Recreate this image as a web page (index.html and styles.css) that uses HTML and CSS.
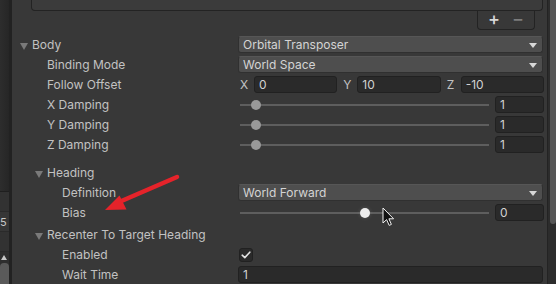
FILE: index.html
```html
<!DOCTYPE html>
<html lang="en">
<head>
    <meta charset="UTF-8">
    <meta name="viewport" content="width=device-width, initial-scale=1.0">
    <title>Cinemachine Body</title>
    <link rel="stylesheet" href="styles.css">
</head>
<body>
    <div class="window">
        <div class="side">
            <div class="side-top"></div>
            <div class="side-row"></div>
            <div class="side-row side-value">5</div>
            <div class="side-row"></div>
            <div class="side-arrow"></div>
            <div class="side-thumb"></div>
        </div>

        <div class="inspector">
            <div class="list-box"></div>
            <div class="list-footer">
                <span class="list-add">+</span>
                <span class="list-remove">−</span>
            </div>

            <div class="rows">
                <div class="row">
                    <div class="label foldout">Body</div>
                    <div class="dropdown">Orbital Transposer</div>
                </div>
                <div class="row">
                    <div class="label indent-1">Binding Mode</div>
                    <div class="dropdown">World Space</div>
                </div>
                <div class="row">
                    <div class="label indent-1">Follow Offset</div>
                    <div class="vector">
                        <div class="axis"><span>X</span><div class="field">0</div></div>
                        <div class="axis"><span>Y</span><div class="field">10</div></div>
                        <div class="axis"><span>Z</span><div class="field">-10</div></div>
                    </div>
                </div>
                <div class="row">
                    <div class="label indent-1">X Damping</div>
                    <div class="slider">
                        <div class="track"><span class="knob" style="left: 6.3%"></span></div>
                        <div class="field">1</div>
                    </div>
                </div>
                <div class="row">
                    <div class="label indent-1">Y Damping</div>
                    <div class="slider">
                        <div class="track"><span class="knob" style="left: 6.3%"></span></div>
                        <div class="field">1</div>
                    </div>
                </div>
                <div class="row">
                    <div class="label indent-1">Z Damping</div>
                    <div class="slider">
                        <div class="track"><span class="knob" style="left: 6.3%"></span></div>
                        <div class="field">1</div>
                    </div>
                </div>

                <div class="row gap-large">
                    <div class="label foldout indent-fold">Heading</div>
                </div>
                <div class="row">
                    <div class="label indent-2">Definition</div>
                    <div class="dropdown">World Forward</div>
                </div>
                <div class="row">
                    <div class="label indent-2">Bias</div>
                    <div class="slider">
                        <div class="track"><span class="knob hot" style="left: 50%"></span></div>
                        <div class="field">0</div>
                    </div>
                </div>

                <div class="row gap-small">
                    <div class="label foldout indent-fold">Recenter To Target Heading</div>
                </div>
                <div class="row">
                    <div class="label indent-2">Enabled</div>
                    <div class="checkbox">
                        <svg width="14" height="14" viewBox="0 0 14 14">
                            <path d="M3.2 7.2 L5.8 9.6 L10.8 4.2" fill="none" stroke="#e2e2e2" stroke-width="1.6" stroke-linecap="round" stroke-linejoin="round"/>
                        </svg>
                    </div>
                </div>
                <div class="row">
                    <div class="label indent-2">Wait Time</div>
                    <div class="field wide">1</div>
                </div>
            </div>
        </div>

        <div class="scrollbar"><div class="scroll-thumb"></div></div>

        <!-- red annotation arrow -->
        <svg class="annotation" width="556" height="284" viewBox="0 0 556 284">
            <line x1="177" y1="177" x2="118" y2="202.5" stroke="#e5232a" stroke-width="4.5" stroke-linecap="round"/>
            <polygon points="105,210 119.5,195.5 126.5,209.5" fill="#e5232a"/>
        </svg>

        <!-- mouse pointer -->
        <svg class="pointer" width="13" height="20" viewBox="0 0 13 20">
            <path d="M1 1 L1 16 L4.6 12.6 L7.2 18.4 L9.4 17.4 L6.9 11.8 L11.6 11.8 Z" fill="#111" stroke="#f2f2f2" stroke-width="1" stroke-linejoin="round"/>
        </svg>
    </div>
</body>
</html>
```

FILE: styles.css
```css
* {
    box-sizing: border-box;
}
body {
    margin: 0;
    background: #383838;
    color: #c2c2c2;
    font-family: 'Inter', 'Noto Sans', sans-serif;
    font-size: 12px;
    overflow: hidden;
}
.window {
    position: relative;
    display: flex;
    width: 556px;
    height: 284px;
    overflow: hidden;
}

/* left neighbour panel */
.side {
    width: 12px;
    flex-shrink: 0;
    background: #2e2e2e;
    border-right: 3px solid #222;
    display: flex;
    flex-direction: column;
}
.side-top {
    height: 192px;
    background: linear-gradient(90deg, #2d2d2d, #262626);
    border-bottom: 1px solid #1f1f1f;
}
.side-row {
    height: 20px;
    background: #323232;
    border-bottom: 1px solid #2a2a2a;
}
.side-value {
    background: #363636;
    color: #c8c8c8;
    font-size: 11px;
    line-height: 20px;
}
.side-arrow {
    margin: 3px 0 0 1px;
    width: 0;
    height: 0;
    border-left: 3.5px solid transparent;
    border-right: 3.5px solid transparent;
    border-bottom: 5px solid #c8c8c8;
}
.side-thumb {
    margin-top: 3px;
    width: 9px;
    flex: 1;
    background: #5a5a5a;
    border-radius: 4px 4px 0 0;
}

/* inspector */
.inspector {
    flex: 1;
    padding: 0 3px 0 8px;
    display: flex;
    flex-direction: column;
}
.list-box {
    height: 12px;
    margin: 0 1px 0 11px;
    background: #3b3b3b;
    border: 1px solid #232323;
    border-top: none;
    border-radius: 0 0 4px 4px;
}
.list-footer {
    align-self: flex-end;
    width: 58px;
    height: 19px;
    margin-right: 9px;
    border: 1px solid #232323;
    border-top: none;
    border-radius: 0 0 4px 4px;
    display: flex;
    justify-content: center;
    align-items: center;
    gap: 12px;
    font-size: 18px;
    font-weight: 500;
    line-height: 1;
    padding-bottom: 2px;
}
.list-add {
    color: #d8d8d8;
}
.list-remove {
    color: #7c7c7c;
}
.rows {
    margin-top: 4px;
}
.row {
    display: grid;
    grid-template-columns: 218px 1fr;
    align-items: center;
    height: 20px;
}
.row.gap-large {
    margin-top: 8px;
}
.row.gap-small {
    margin-top: 2px;
}
.label {
    white-space: nowrap;
    line-height: 21px;
}
.foldout::before {
    content: '';
    display: inline-block;
    width: 0;
    height: 0;
    border-left: 4px solid transparent;
    border-right: 4px solid transparent;
    border-top: 7px solid #7a7a7a;
    margin-right: 4px;
    vertical-align: -1px;
}
.indent-1 {
    padding-left: 27px;
}
.indent-fold {
    padding-left: 15px;
}
.indent-2 {
    padding-left: 42px;
}

/* controls */
.dropdown {
    height: 17px;
    line-height: 16px;
    padding: 0 4px;
    background: #4e4e4e;
    border: 1px solid #303030;
    border-top-color: #565656;
    border-radius: 3px;
    color: #d4d4d4;
    margin-right: 1px;
    position: relative;
}
.dropdown::after {
    content: '';
    position: absolute;
    right: 5px;
    top: 6px;
    border-left: 4px solid transparent;
    border-right: 4px solid transparent;
    border-top: 5px solid #d8d8d8;
}
.field {
    height: 17px;
    line-height: 15px;
    padding: 0 4px;
    background: #2a2a2a;
    border: 1px solid #212121;
    border-radius: 3px;
    color: #d2d2d2;
}
.field.wide {
    margin-right: 1px;
}
.vector {
    display: flex;
    gap: 4px;
}
.axis {
    flex: 1;
    display: flex;
    align-items: center;
}
.axis span {
    width: 16px;
    padding-left: 2px;
}
.axis .field {
    flex: 1;
}
.slider {
    display: flex;
    align-items: center;
    gap: 6px;
}
.track {
    flex: 1;
    margin-left: 2px;
    height: 2px;
    background: #5e5e5e;
    position: relative;
}
.knob {
    position: absolute;
    top: 50%;
    width: 10px;
    height: 10px;
    border-radius: 50%;
    background: #999;
    transform: translate(-50%, -50%);
}
.knob.hot {
    background: #ececec;
    box-shadow: 0 0 4px rgba(255, 255, 255, 0.15);
}
.slider .field {
    width: 49px;
}
.checkbox {
    width: 14px;
    height: 14px;
    margin-left: 1px;
    background: #2a2a2a;
    border: 1px solid #212121;
    border-radius: 3px;
    display: flex;
    align-items: center;
    justify-content: center;
}
.checkbox svg {
    display: block;
    flex-shrink: 0;
}

/* right scrollbar */
.scrollbar {
    width: 9px;
    flex-shrink: 0;
    background: #2c2c2c;
    border-left: 1px solid #232323;
    padding-left: 2px;
}
.scroll-thumb {
    height: 224px;
    background: #565656;
    border-radius: 0 0 3px 3px;
}

/* overlays */
.annotation {
    position: absolute;
    left: 0;
    top: 0;
    pointer-events: none;
}
.pointer {
    position: absolute;
    left: 382px;
    top: 207px;
}
```
